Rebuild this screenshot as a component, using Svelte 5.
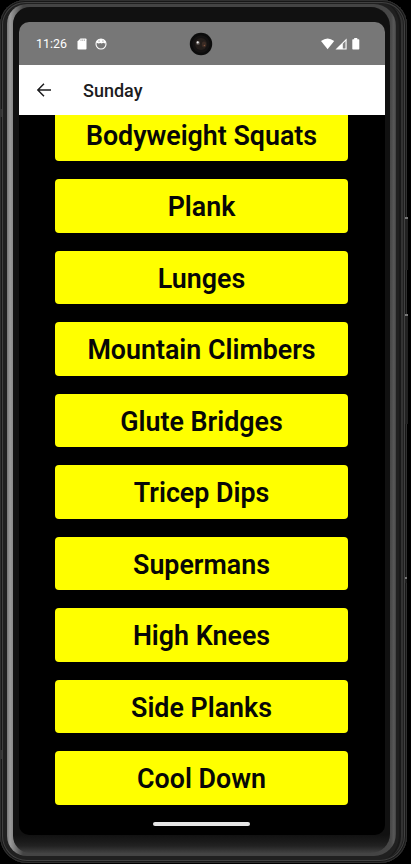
<script>
  const exercises = [
    'Bodyweight Squats',
    'Plank',
    'Lunges',
    'Mountain Climbers',
    'Glute Bridges',
    'Tricep Dips',
    'Supermans',
    'High Knees',
    'Side Planks',
    'Cool Down'
  ];
</script>

<div class="stage">
  <div class="shell">
    <div class="rim">
      <div class="bezel">
        <div class="screen">
          <div class="status">
            <span class="time">11:26</span>
            <svg class="sd" width="10" height="12" viewBox="0 0 10 12">
              <path d="M3.4 0.5H8.7Q9.5 .5 9.5 1.3V10.7Q9.5 11.5 8.7 11.5H1.3Q.5 11.5 .5 10.7V3.4Z" fill="#fff" />
              <path d="M4 1.4V3M5.7 1.4V3M7.4 1.4V3" stroke="#999" stroke-width=".7" />
            </svg>
            <svg class="face" width="12" height="12" viewBox="0 0 12 12">
              <circle cx="6" cy="6" r="5" fill="none" stroke="#fff" stroke-width="1.1" />
              <path d="M1.3 4.4Q2.5 1 6 1T10.7 4.4L9.8 5.4 8.3 4.8 6.7 5.5 5.2 4.9 3.7 5.5 2.2 5Z" fill="#fff" />
              <path d="M3.2 3.1H5M7 3.1H8.8" stroke="#999" stroke-width=".7" />
            </svg>
            <svg class="lens" width="24" height="24" viewBox="0 0 24 24">
              <circle cx="12" cy="12" r="11.2" fill="#0c0c0c" />
              <circle cx="12" cy="12" r="8.7" fill="#151313" />
              <circle cx="12" cy="12" r="6" fill="#241e1b" />
              <ellipse cx="15" cy="12.5" rx="2.2" ry="3" fill="#3b2b24" />
              <circle cx="9" cy="11" r="2" fill="#554f4b" />
              <circle cx="8.7" cy="10.4" r="1.1" fill="#eee" />
              <circle cx="15.4" cy="13.5" r=".8" fill="#80543e" />
            </svg>
            <svg class="signals" width="40" height="12" viewBox="0 0 40 12">
              <path d="M0 3Q6.6-2 13.2 3L6.6 11.3Z" fill="#fff" />
              <path d="M25.6 .6V11.5H14.5Z" fill="#fff" />
              <path d="M21.8 5.8 24.5 3V10.5H21.8Z" fill="#848484" />
              <path d="M33.2 1.2V0H36.3V1.2H37.6Q38.3 1.2 38.3 1.9V10.8Q38.3 11.5 37.6 11.5H32Q31.3 11.5 31.3 10.8V1.9Q31.3 1.2 32 1.2Z" fill="#fff" />
            </svg>
          </div>
          <header>
            <svg width="16" height="16" viewBox="0 0 16 16" fill="none" stroke="#1c1c1e" stroke-width="1.45">
              <path d="M15 8H2M8 1.8 1.8 8 8 14.2" />
            </svg>
            <h1>Sunday</h1>
          </header>
          <main>
            {#each exercises as name}
              <button>{name}</button>
            {/each}
          </main>
          <div class="home"></div>
        </div>
      </div>
    </div>
    <i class="key power"></i>
    <i class="key volume"></i>
    <i class="key lower"></i>
    <i class="key left-upper"></i>
    <i class="key left-lower"></i>
  </div>
</div>

<style>
  :global(body) { background: #000; }
  .stage {
    width: 411px;
    height: 864px;
    overflow: hidden;
    background: #000;
    font-family: Roboto, sans-serif;
  }
  .shell {
    position: relative;
    box-sizing: border-box;
    width: 407px;
    height: 863px;
    padding: 4px 11px 7px 7px;
    border-radius: 25px 25px 27px 27px;
    background: #202020;
    box-shadow: inset 0 0 0 1px #303030, inset 0 0 0 2px #171717,
      inset 0 0 0 3px #414141, inset 0 0 0 4px #202020,
      inset -6px 0 0 0 #333, inset -8px 0 0 0 #191919;
  }
  .rim {
    box-sizing: border-box;
    height: 852px;
    padding: 3px 6px 3px;
    border-radius: 20px 22px 22px 20px;
    background: linear-gradient(to right, #777 0, #9b9b9b 3px, #888 6px, #444 16px, #444 370px, #484848 384px, #595959 387px, #414141 389px);
  }
  .bezel {
    box-sizing: border-box;
    height: 846px;
    padding: 15px 5px 18px 6px;
    border-radius: 17px 19px 19px 17px;
    background: linear-gradient(to bottom, #111 0, #111 828px, #1b1b1b 835px, #222 839px, #414141 846px);
  }
  .screen {
    display: flex;
    flex-direction: column;
    width: 366px;
    height: 813px;
    overflow: hidden;
    border-radius: 10px;
    background: #000;
  }
  .status {
    display: flex;
    align-items: center;
    flex: none;
    box-sizing: border-box;
    height: 43px;
    padding-left: 17px;
    background: #777;
    color: #fff;
  }
  .time {
    width: 41px;
    font-size: 12.4px;
  }
  .face { margin-left: 8.4px; }
  .lens { margin-left: 82.1px; }
  .signals { margin-left: 107.3px; }
  header {
    display: flex;
    align-items: center;
    flex: none;
    box-sizing: border-box;
    height: 50px;
    padding-left: 17px;
    background: #fff;
  }
  h1 {
    margin: 2px 0 0 31px;
    color: #1c1c1e;
    font-size: 18px;
    font-weight: 500;
    line-height: 24px;
  }
  main {
    display: flex;
    flex: none;
    flex-direction: column;
    justify-content: flex-end;
    gap: 17.9px;
    box-sizing: border-box;
    height: 689.6px;
    overflow: hidden;
    padding: 0 37px 0 36px;
  }
  button {
    flex: none;
    box-sizing: border-box;
    height: 53.6px;
    padding: 2px 0 0;
    border: 0;
    border-radius: 4px;
    background: #ff0;
    color: #070707;
    font: 600 26.8px/52px Roboto, sans-serif;
    white-space: nowrap;
  }
  .home {
    flex: none;
    width: 97px;
    height: 4px;
    margin: 17.4px 0 0 134px;
    border-radius: 2px;
    background: #e6e6e6;
  }
  .key {
    position: absolute;
    left: 405px;
    width: 3px;
    background: #222;
    border-top: 2px solid #777;
  }
  .power { top: 217px; height: 51px; }
  .volume { top: 314px; height: 108px; }
  .lower { top: 577px; height: 4px; width: 2px; }
  .left-upper, .left-lower { left: 0; width: 2px; border: 0; background: #353535; }
  .left-upper { top: 109px; height: 8px; }
  .left-lower { top: 750px; height: 9px; }
</style>
